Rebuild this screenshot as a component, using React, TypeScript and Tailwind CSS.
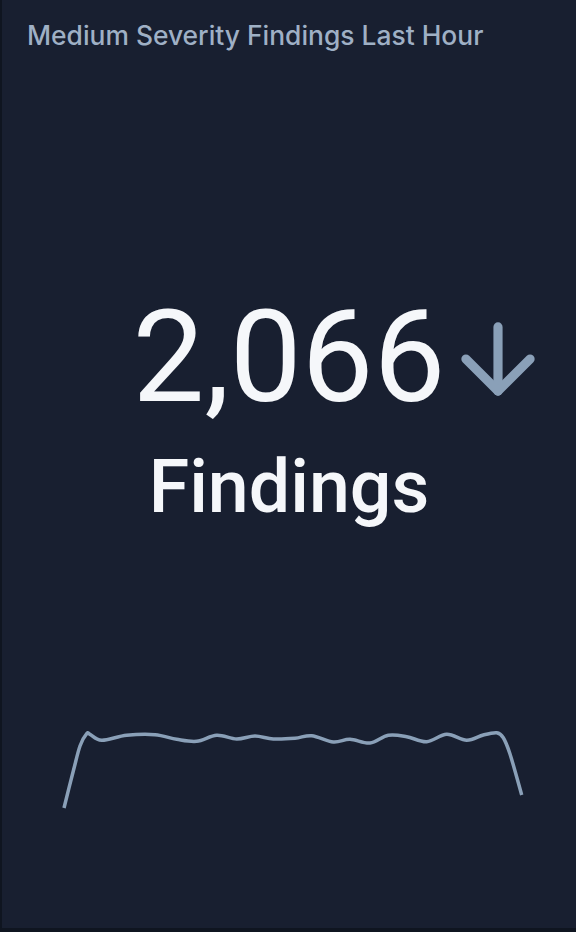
import React from 'react';
import { ArrowDown } from 'lucide-react';

// sparkline points in page coordinates (y offset by svg top = 720)
const points: [number, number][] = [
  [64, 807], [73.3, 770], [80, 745], [86.7, 732.7], [90, 733.3], [101.7, 739.3],
  [126.7, 734.3], [155, 733.7], [176.7, 738.3], [196.7, 740.3], [216.7, 734.3],
  [236.7, 738], [255, 735], [273.3, 738], [295, 737.3], [311.7, 734.7],
  [333.3, 741], [350, 738.3], [370, 742], [388.3, 734.3], [406.7, 735.7],
  [426.7, 740.7], [446.7, 733.3], [466.7, 739.3], [483.3, 734], [496.7, 731.7],
  [503.3, 736.7], [510, 753], [521.7, 794],
];

const smoothPath = (pts: [number, number][], top: number) => {
  const p = pts.map(([x, y]) => [x, y - top]);
  let d = `M${p[0][0]},${p[0][1]}`;
  for (let i = 0; i < p.length - 1; i++) {
    const p0 = p[i - 1] || p[i];
    const p1 = p[i];
    const p2 = p[i + 1];
    const p3 = p[i + 2] || p2;
    const c1x = p1[0] + (p2[0] - p0[0]) / 6;
    const c1y = p1[1] + (p2[1] - p0[1]) / 6;
    const c2x = p2[0] - (p3[0] - p1[0]) / 6;
    const c2y = p2[1] - (p3[1] - p1[1]) / 6;
    d += ` C${c1x.toFixed(1)},${c1y.toFixed(1)} ${c2x.toFixed(1)},${c2y.toFixed(1)} ${p2[0]},${p2[1]}`;
  }
  return d;
};

const App = () => {
  return (
    <div className="w-[576px] h-[932px] bg-[#181f30] border-l-2 border-b-4 border-[#0f1520] flex flex-col overflow-hidden">
      <div className="pt-[19px] pl-[25px] text-[26.4px] leading-8 font-medium text-[#9fb0c5] font-['Inter',sans-serif]">
        Medium Severity Findings Last Hour
      </div>

      <div className="mt-[242px] flex justify-center font-['Roboto',sans-serif]">
        <div className="relative">
          <span className="block text-[128px] leading-none text-[#f5f7fa]">2,066</span>
          <ArrowDown
            size={110}
            strokeWidth={2}
            className="absolute left-[calc(100%-2px)] top-[11px] text-[#8aa0b8]"
          />
        </div>
      </div>

      <div className="mt-[30px] flex justify-center font-['Roboto',sans-serif]">
        <span className="text-[73.5px] leading-none font-medium text-[#f5f7fa]">Findings</span>
      </div>

      <svg className="mt-[196px] block shrink-0" width="574" height="100" viewBox="2 0 574 100">
        <path d={smoothPath(points, 720)} fill="none" stroke="#8aa0b8" strokeWidth="3.5" strokeLinejoin="round" />
      </svg>
    </div>
  );
};

export default App;
